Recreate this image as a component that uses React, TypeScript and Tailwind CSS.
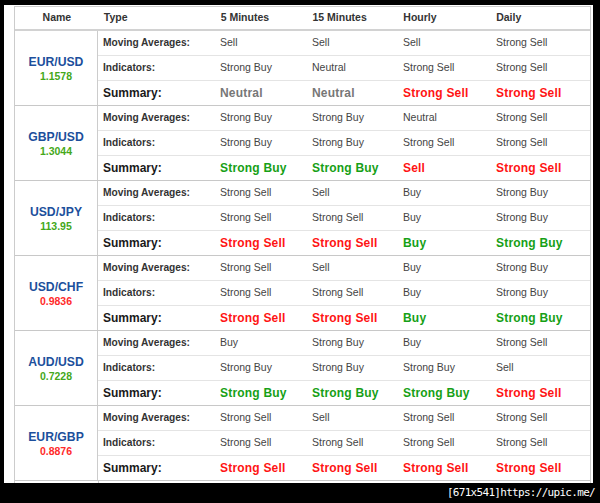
import React from 'react';

type Signal = 'Strong Buy' | 'Buy' | 'Neutral' | 'Sell' | 'Strong Sell';

interface Pair {
  name: string;
  price: string;
  up: boolean;
  ma: Signal[];
  ind: Signal[];
  sum: Signal[];
}

const PAIRS: Pair[] = [
  {
    name: 'EUR/USD', price: '1.1578', up: true,
    ma: ['Sell', 'Sell', 'Sell', 'Strong Sell'],
    ind: ['Strong Buy', 'Neutral', 'Strong Sell', 'Strong Sell'],
    sum: ['Neutral', 'Neutral', 'Strong Sell', 'Strong Sell'],
  },
  {
    name: 'GBP/USD', price: '1.3044', up: true,
    ma: ['Strong Buy', 'Strong Buy', 'Neutral', 'Strong Sell'],
    ind: ['Strong Buy', 'Strong Buy', 'Strong Sell', 'Strong Sell'],
    sum: ['Strong Buy', 'Strong Buy', 'Sell', 'Strong Sell'],
  },
  {
    name: 'USD/JPY', price: '113.95', up: true,
    ma: ['Strong Sell', 'Sell', 'Buy', 'Strong Buy'],
    ind: ['Strong Sell', 'Strong Sell', 'Buy', 'Strong Buy'],
    sum: ['Strong Sell', 'Strong Sell', 'Buy', 'Strong Buy'],
  },
  {
    name: 'USD/CHF', price: '0.9836', up: false,
    ma: ['Strong Sell', 'Sell', 'Buy', 'Strong Buy'],
    ind: ['Strong Sell', 'Strong Sell', 'Buy', 'Strong Buy'],
    sum: ['Strong Sell', 'Strong Sell', 'Buy', 'Strong Buy'],
  },
  {
    name: 'AUD/USD', price: '0.7228', up: true,
    ma: ['Buy', 'Strong Buy', 'Buy', 'Strong Sell'],
    ind: ['Strong Buy', 'Strong Buy', 'Strong Buy', 'Sell'],
    sum: ['Strong Buy', 'Strong Buy', 'Strong Buy', 'Strong Sell'],
  },
  {
    name: 'EUR/GBP', price: '0.8876', up: false,
    ma: ['Strong Sell', 'Sell', 'Strong Sell', 'Strong Sell'],
    ind: ['Strong Sell', 'Strong Sell', 'Strong Sell', 'Strong Sell'],
    sum: ['Strong Sell', 'Strong Sell', 'Strong Sell', 'Strong Sell'],
  },
];

// column widths after the Name column
const COLS = ['w-[117px]', 'w-[92px]', 'w-[91px]', 'w-[93px]', 'w-[99px]'];

function summaryColor(s: Signal) {
  if (s === 'Neutral') return 'text-[#777777]';
  if (s === 'Buy' || s === 'Strong Buy') return 'text-[#16a016]';
  return 'text-[#ff1414]';
}

function SignalRow({ label, values, summary }: { label: string; values: Signal[]; summary?: boolean }) {
  return (
    <div
      className={`flex items-center ${
        summary ? 'h-[24px]' : 'h-[25px] border-b border-[#e4e4e4]'
      }`}
    >
      <div
        className={`${COLS[0]} pl-[5px] font-bold ${
          summary ? 'text-[12px] text-[#1a1a1a]' : 'text-[10.2px] text-[#333]'
        }`}
      >
        {label}
      </div>
      {values.map((v, i) => (
        <div
          key={i}
          className={`${COLS[i + 1]} pl-[5px] ${
            summary
              ? `text-[12px] font-bold tracking-[0.2px] ${summaryColor(v)}`
              : 'text-[10.5px] text-[#444]'
          }`}
        >
          {v}
        </div>
      ))}
    </div>
  );
}

export default function App() {
  return (
    <div
      className="relative h-[503px] w-[600px] overflow-hidden bg-black"
      style={{ fontFamily: '"Liberation Sans", Arial, sans-serif' }}
    >
      <div className="absolute left-[4px] top-[5px] h-[478px] w-[589px] overflow-hidden bg-white pl-[10px] pt-[1px]">
        <div className="w-[577px] border-x border-t border-[#cccccc]">
          {/* Header */}
          <div className="flex h-[24px] items-center border-b-2 border-[#d2d2d2] text-[10.5px] font-bold text-[#333]">
            <div className="w-[84px] text-center">Name</div>
            <div className={`${COLS[0]} pl-[5px]`}>Type</div>
            <div className={`${COLS[1]} pl-[5px]`}>5 Minutes</div>
            <div className={`${COLS[2]} pl-[5px]`}>15 Minutes</div>
            <div className={`${COLS[3]} pl-[5px]`}>Hourly</div>
            <div className={`${COLS[4]} pl-[5px]`}>Daily</div>
          </div>

          {PAIRS.map((p) => (
            <div key={p.name} className="flex border-b border-[#c8c8c8]">
              <div className="flex w-[84px] flex-col items-center justify-center border-r border-[#cccccc] pt-[1px]">
                <div className="text-[12.2px] font-bold leading-[15px] text-[#1c4f9c]">{p.name}</div>
                <div
                  className={`text-[10.5px] font-bold leading-[13px] ${
                    p.up ? 'text-[#44a81a]' : 'text-[#ff2a2a]'
                  }`}
                >
                  {p.price}
                </div>
              </div>
              <div className="flex flex-col">
                <SignalRow label="Moving Averages:" values={p.ma} />
                <SignalRow label="Indicators:" values={p.ind} />
                <SignalRow label="Summary:" values={p.sum} summary />
              </div>
            </div>
          ))}

          {/* next group, cut off by the frame */}
          <div className="flex h-[20px]">
            <div className="w-[84px] border-r border-[#cccccc]"></div>
            <div className="flex-1"></div>
          </div>
        </div>
      </div>

      <div
        className="absolute bottom-[2px] right-[5px] text-[11px] leading-[16px] tracking-[-0.7px] text-white"
        style={{ fontFamily: '"DejaVu Sans Mono", monospace' }}
      >
        [671x541]https://upic.me/
      </div>
    </div>
  );
}
